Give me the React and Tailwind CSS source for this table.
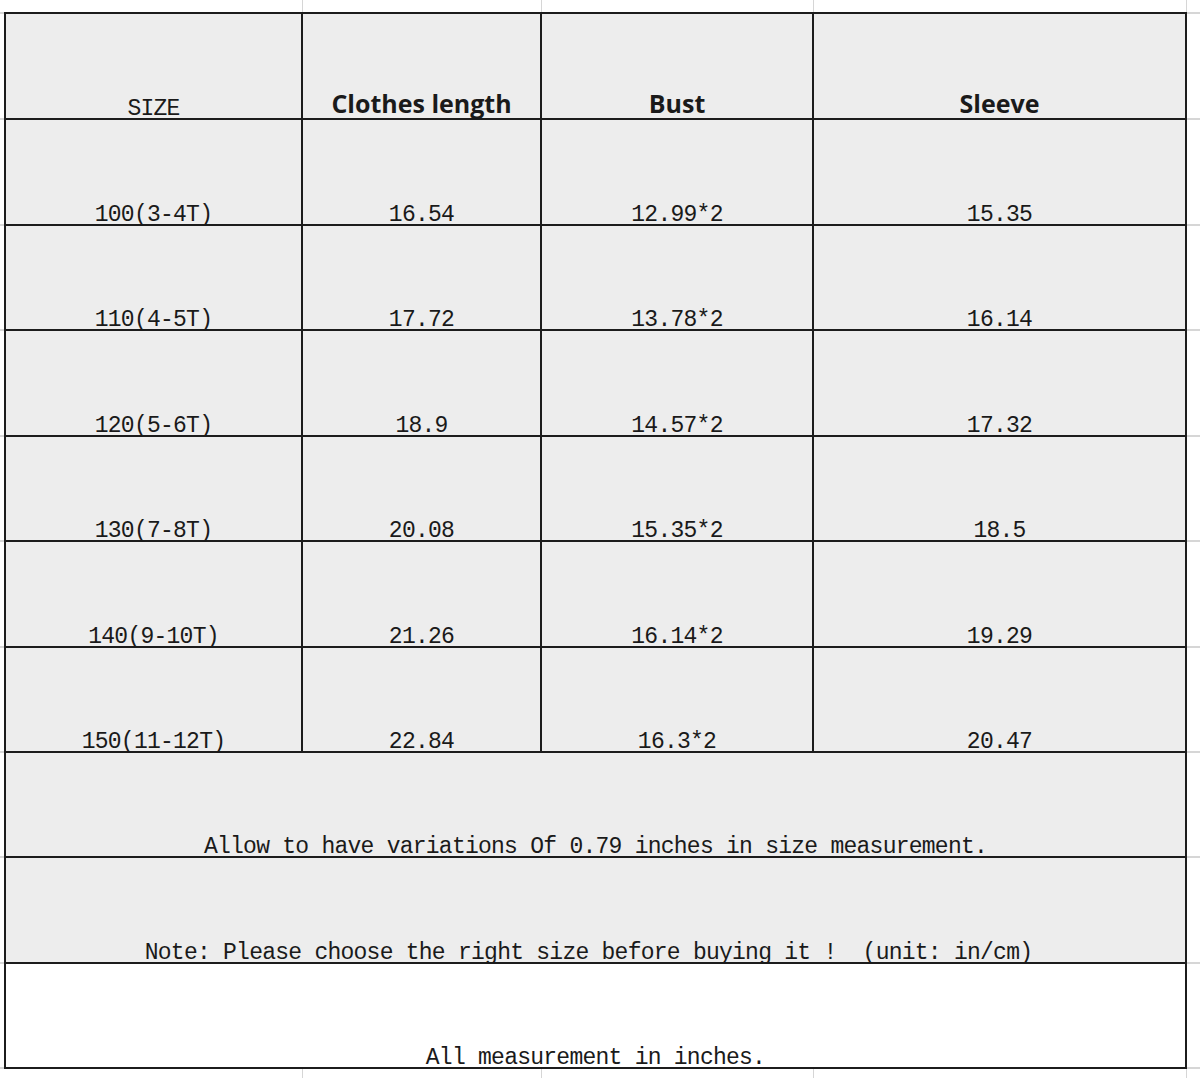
const rows = [
  ["100(3-4T)", "16.54", "12.99*2", "15.35"],
  ["110(4-5T)", "17.72", "13.78*2", "16.14"],
  ["120(5-6T)", "18.9", "14.57*2", "17.32"],
  ["130(7-8T)", "20.08", "15.35*2", "18.5"],
  ["140(9-10T)", "21.26", "16.14*2", "19.29"],
  ["150(11-12T)", "22.84", "16.3*2", "20.47"],
];

// cell heights of the ten sheet rows (header, six sizes, three notes)
const heights = [
  "h-[104px]",
  "h-[104px]",
  "h-[103px]",
  "h-[104px]",
  "h-[103px]",
  "h-[104px]",
  "h-[103px]",
  "h-[103px]",
  "h-[104px]",
  "h-[103px]",
];

const mono =
  "font-['Liberation_Mono',monospace] text-[23px] tracking-[-0.75px] leading-[18px] text-[#1a1a1a]";
const head =
  "font-['Open_Sans',sans-serif] font-bold text-[25px] leading-[18px] text-[#1a1a1a] pb-[6px]";

function Cell({ h, className = "", children, plain }) {
  return (
    <div
      className={`${h} flex items-end justify-center whitespace-pre ${
        plain ? "bg-white" : "bg-[#ededed]"
      } ${className}`}
    >
      {children}
    </div>
  );
}

function Gutter({ className }) {
  return (
    <div className={`flex flex-col ${className}`}>
      <div className="h-[2px] bg-[#d6d6d6]" />
      {heights.map((h, i) => (
        <div key={i} className="flex flex-col">
          <div className={h} />
          <div className="h-[2px] bg-[#d6d6d6]" />
        </div>
      ))}
    </div>
  );
}

function Strip({ className }) {
  return (
    <div className={`flex ${className}`}>
      <div className="w-[303px] border-r border-[#d6d6d6]" />
      <div className="w-[239px] border-r border-[#d6d6d6]" />
      <div className="w-[272px] border-r border-[#d6d6d6]" />
      <div className="w-[373px] border-r border-[#d6d6d6]" />
    </div>
  );
}

export default function App() {
  return (
    <div className="w-[1200px] h-[1078px] bg-white overflow-hidden flex flex-col">
      <Strip className="h-[12px]" />
      <div className="flex">
        <Gutter className="w-[4px]" />
        <div className="grid grid-cols-[295px_237px_270px_371px] gap-[2px] p-[2px] bg-[#1c1c1c]">
          <Cell h={heights[0]} className={mono}>SIZE</Cell>
          <Cell h={heights[0]} className={head}>Clothes length</Cell>
          <Cell h={heights[0]} className={head}>Bust</Cell>
          <Cell h={heights[0]} className={head}>Sleeve</Cell>

          {rows.map((r, i) =>
            r.map((v, j) => (
              <Cell key={`${i}-${j}`} h={heights[i + 1]} className={mono}>
                {v}
              </Cell>
            ))
          )}

          <Cell h={heights[7]} className={`${mono} col-span-4`}>
            Allow to have variations Of 0.79 inches in size measurement.
          </Cell>
          <Cell h={heights[8]} className={`${mono} col-span-4 pr-[14px]`}>
            {"Note: Please choose the right size before buying it !  (unit: in/cm)"}
          </Cell>
          <Cell h={heights[9]} plain className={`${mono} col-span-4`}>
            All measurement in inches.
          </Cell>
        </div>
        <Gutter className="flex-1" />
      </div>
      <Strip className="flex-1" />
    </div>
  );
}
